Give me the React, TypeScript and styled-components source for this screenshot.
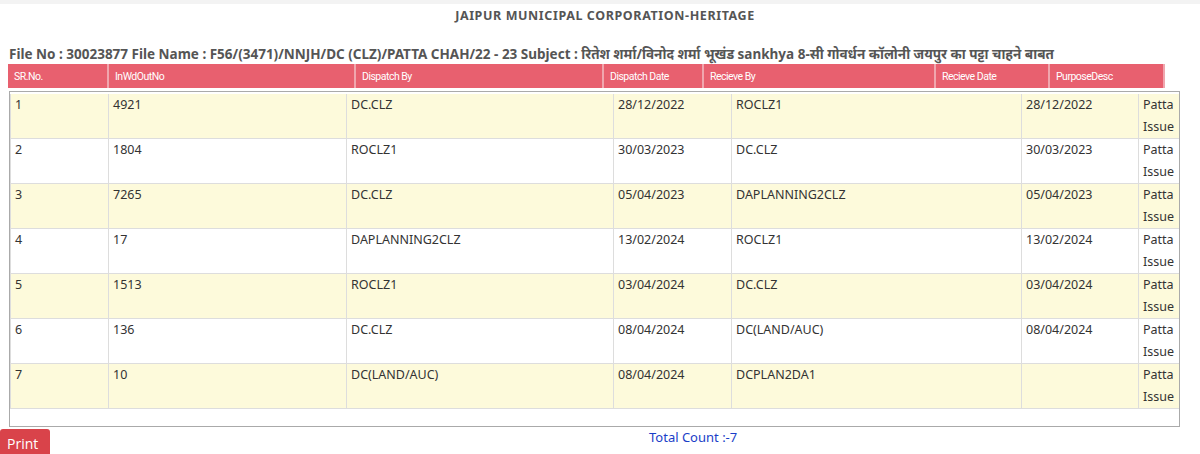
import React from "react";
import styled, { createGlobalStyle } from "styled-components";

const Global = createGlobalStyle`
  body { margin: 0; background: #fff; font-family: "Noto Sans", "Open Sans", sans-serif; }
`;
const Page = styled.div`
  width: 1200px; height: 454px; position: relative; overflow: hidden;
  border-top: 4px solid #f3f3f3; box-sizing: border-box;
`;
const Title = styled.div`
  text-align: center; font-size: 12.5px; font-weight: 700; color: #555; letter-spacing: 0.6px;
  padding-top: 3px; height: 30px; padding-left: 10px;
`;
const FileLine = styled.div`
  font-size: 13.5px; font-weight: 700; color: #555; padding-left: 9px; margin-top: 8px; line-height: 18px;
  font-family: "Noto Sans", sans-serif; white-space: nowrap;
`;
const Table = styled.table`
  border-collapse: collapse; table-layout: fixed;
`;
const Head = styled(Table)`
  margin-left: 8px; width: 1156px; margin-top: 1px;
`;
const Th = styled.th`
  background: #e8606f; color: #fff; font-weight: 400; font-size: 10.5px; text-align: left;
  height: 24px; padding: 0 0 0 6px; border-right: 2px solid #f0a6ae; letter-spacing: -0.5px;
  font-family: "Liberation Sans Narrow", "Roboto", sans-serif;
`;
const BodyWrap = styled.div`
  margin: 3px 0 0 9px; width: 1171px; height: 336px; border: 1px solid #aaa; box-sizing: border-box;
  padding-top: 2px; overflow: hidden;
`;
const Body = styled(Table)`
  width: 1169px;
`;
const Tr = styled.tr<{ $alt: boolean }>`
  background: ${(p) => (p.$alt ? "#fdfadb" : "#fff")};
  border-bottom: 1px solid #ddd;
`;
const Td = styled.td`
  vertical-align: top; font-size: 12.5px; color: #333; padding: 0 4px; height: 44px;
  line-height: 22px; border-left: 1px solid #ddd; overflow: hidden; box-sizing: border-box;
`;
const Footer = styled.div`
  display: flex; align-items: flex-end; margin-top: 1px;
`;
const PrintBtn = styled.button`
  background: #d9434a; color: #fff; border: none; border-radius: 3px 3px 0 0; width: 50px; height: 25px;
  font-size: 14px; font-family: "Open Sans", sans-serif; padding: 3px 0 0 7px; text-align: left;
`;
const Total = styled.div`
  color: #1a3ec8; font-size: 13px; margin-left: 599px; padding-bottom: 8px;
`;

const heads = [100, 247, 248, 100, 232, 114, 115];
const headNames = ["SR.No.", "InWdOutNo", "Dispatch By", "Dispatch Date", "Recieve By", "Recieve Date", "PurposeDesc"];
const cols = [98, 238, 267, 118, 290, 117, 41];
const rows = [
  ["1", "4921", "DC.CLZ", "28/12/2022", "ROCLZ1", "28/12/2022"],
  ["2", "1804", "ROCLZ1", "30/03/2023", "DC.CLZ", "30/03/2023"],
  ["3", "7265", "DC.CLZ", "05/04/2023", "DAPLANNING2CLZ", "05/04/2023"],
  ["4", "17", "DAPLANNING2CLZ", "13/02/2024", "ROCLZ1", "13/02/2024"],
  ["5", "1513", "ROCLZ1", "03/04/2024", "DC.CLZ", "03/04/2024"],
  ["6", "136", "DC.CLZ", "08/04/2024", "DC(LAND/AUC)", "08/04/2024"],
  ["7", "10", "DC(LAND/AUC)", "08/04/2024", "DCPLAN2DA1", ""],
];

export default function App() {
  return (
    <Page>
      <Global />
      <Title>JAIPUR MUNICIPAL CORPORATION-HERITAGE</Title>
      <FileLine>
        File No : 30023877 File Name : F56/(3471)/NNJH/DC (CLZ)/PATTA CHAH/22 - 23 Subject : रितेश शर्मा/विनोद शर्मा भूखंड sankhya 8-सी गोवर्धन कॉलोनी जयपुर का पट्टा चाहने बाबत
      </FileLine>
      <Head>
        <colgroup>{heads.map((w, i) => <col key={i} style={{ width: w }} />)}</colgroup>
        <thead><tr>{headNames.map((h) => <Th key={h}>{h}</Th>)}</tr></thead>
      </Head>
      <BodyWrap>
        <Body>
          <colgroup>{cols.map((w, i) => <col key={i} style={{ width: w }} />)}</colgroup>
          <tbody>
            {rows.map((r, i) => (
              <Tr key={i} $alt={i % 2 === 0}>
                {r.map((c, j) => <Td key={j}>{c}</Td>)}
                <Td>Patta Issue</Td>
              </Tr>
            ))}
          </tbody>
        </Body>
      </BodyWrap>
      <Footer>
        <PrintBtn>Print</PrintBtn>
        <Total>Total Count :-7</Total>
      </Footer>
    </Page>
  );
}
